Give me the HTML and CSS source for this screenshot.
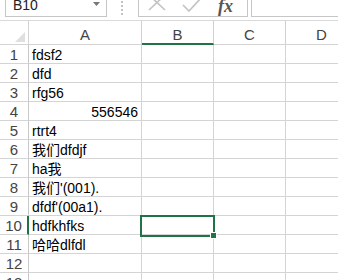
FILE: index.html
```html
<!DOCTYPE html>
<html lang="zh">
<head>
<meta charset="utf-8">
<link rel="stylesheet" href="styles.css">
</head>
<body>
<div class="toolbar">
  <div class="namebox">
    <span class="name">B10</span>
    <svg class="dd" width="7" height="4" viewBox="0 0 7 4"><path d="M0 0H7L3.5 4Z" fill="#777"/></svg>
  </div>
  <div class="dots"><i></i><i></i><i></i><i></i></div>
  <div class="fnbox">
    <svg class="ic-x" width="22" height="12" viewBox="0 0 22 12"><path d="M3 -5L19 10M19 -5L3 10" stroke="#c4c4c4" stroke-width="1.7" fill="none"/></svg>
    <svg class="ic-ok" width="22" height="12" viewBox="0 0 22 12"><path d="M2 5L8 11L20 -2" stroke="#c4c4c4" stroke-width="1.7" fill="none"/></svg>
    <span class="fx">fx</span>
  </div>
  <div class="formula"></div>
</div>
<div class="sheet">
  <div class="corner"><span class="tri"></span></div>
  <div class="ch">A</div><div class="ch sel">B</div><div class="ch">C</div><div class="ch">D</div>

  <div class="rh">1</div><div class="c">fdsf2</div><div class="c"></div><div class="c"></div><div class="c"></div>
  <div class="rh">2</div><div class="c">dfd</div><div class="c"></div><div class="c"></div><div class="c"></div>
  <div class="rh">3</div><div class="c">rfg56</div><div class="c"></div><div class="c"></div><div class="c"></div>
  <div class="rh">4</div><div class="c num">556546</div><div class="c"></div><div class="c"></div><div class="c"></div>
  <div class="rh">5</div><div class="c">rtrt4</div><div class="c"></div><div class="c"></div><div class="c"></div>
  <div class="rh">6</div><div class="c">我们dfdjf</div><div class="c"></div><div class="c"></div><div class="c"></div>
  <div class="rh">7</div><div class="c">ha我</div><div class="c"></div><div class="c"></div><div class="c"></div>
  <div class="rh">8</div><div class="c">我们'(001).</div><div class="c"></div><div class="c"></div><div class="c"></div>
  <div class="rh">9</div><div class="c">dfdf'(00a1).</div><div class="c"></div><div class="c"></div><div class="c"></div>
  <div class="rh rsel">10</div><div class="c">hdfkhfks</div><div class="c active"><span class="selbox"><span class="handle"></span></span></div><div class="c"></div><div class="c"></div>
  <div class="rh">11</div><div class="c">哈哈dlfdl</div><div class="c"></div><div class="c"></div><div class="c"></div>
  <div class="rh">12</div><div class="c"></div><div class="c"></div><div class="c"></div><div class="c"></div>
  <div class="rh">13</div><div class="c"></div><div class="c"></div><div class="c"></div><div class="c"></div>
</div>
</body>
</html>
```
FILE: styles.css
```css
html, body {
  margin: 0;
  padding: 0;
  background: #fff;
  overflow: hidden;
  width: 338px;
  height: 280px;
}
body {
  font-family: "Liberation Sans", "Noto Sans CJK SC", sans-serif;
}
.toolbar {
  display: flex;
  align-items: flex-start;
  height: 20px;
}
.namebox {
  margin-left: 5px;
  width: 102px;
  height: 17px;
  box-sizing: border-box;
  border: 1px solid #c6c6c6;
  border-top: none;
  display: flex;
  align-items: flex-start;
  justify-content: space-between;
  padding: 0 6px 0 7px;
}
.name {
  font-size: 14px;
  line-height: 12px;
  color: #222;
  margin-top: -1px;
}
.dd {
  margin-top: 2px;
}
.dots {
  margin-left: 14px;
  width: 2px;
  display: flex;
  flex-direction: column;
  gap: 2px;
  padding-top: 1px;
}
.dots i {
  display: block;
  width: 2px;
  height: 2px;
  background: #c2c2c2;
}
.fnbox {
  margin-left: 15px;
  width: 110px;
  height: 17px;
  box-sizing: border-box;
  border: 1px solid #c6c6c6;
  border-top: none;
  display: flex;
  align-items: flex-start;
  padding-left: 7px;
}
.ic-x {
  display: block;
}
.ic-ok {
  display: block;
  margin-left: 13px;
}
.fx {
  margin-left: 15px;
  font-family: "Liberation Serif", serif;
  font-style: italic;
  font-weight: bold;
  font-size: 18px;
  line-height: 12px;
  color: #555;
}
.formula {
  margin-left: 3px;
  flex: 1;
  height: 17px;
  box-sizing: border-box;
  border: 1px solid #c6c6c6;
  border-top: none;
  border-right: none;
}
.sheet {
  display: grid;
  grid-template-columns: 29px 113px 72px 72px 72px;
  grid-template-rows: 25px repeat(13, 19px);
  width: 358px;
}
.sheet > div {
  box-sizing: border-box;
  border-right: 1px solid #d4d4d4;
  border-bottom: 1px solid #d4d4d4;
  font-size: 14px;
  white-space: nowrap;
}
.corner {
  position: relative;
  border-top: 1px solid #dadada;
}
.tri {
  position: absolute;
  right: 3px;
  bottom: 2px;
  width: 0;
  height: 0;
  border-left: 10px solid transparent;
  border-bottom: 10px solid #dfdfdf;
}
.ch {
  border-top: 1px solid #dadada;
  text-align: center;
  color: #444;
  font-size: 15px !important;
  display: flex;
  align-items: flex-end;
  justify-content: center;
  padding-bottom: 1px;
  border-right-color: #d0d0d0 !important;
}
.ch.sel {
  border-bottom: 2px solid #217346 !important;
  padding-bottom: 0;
}
.rh {
  color: #444;
  font-size: 15px !important;
  text-align: center;
  line-height: 18px;
  padding-top: 1px;
  border-right-color: #c8c8c8 !important;
}
.rh.rsel {
  border-right: 2px solid #217346 !important;
}
.c {
  color: #000;
  line-height: 18px;
  padding: 1px 3px 0;
  overflow: visible;
}
.c.num {
  text-align: right;
}
.active {
  position: relative;
}
.selbox {
  position: absolute;
  left: -2px;
  top: -1px;
  width: 75px;
  height: 22px;
  box-sizing: border-box;
  border: 2px solid #217346;
  z-index: 2;
}
.handle {
  position: absolute;
  right: -4px;
  bottom: -4px;
  width: 5px;
  height: 5px;
  background: #217346;
  border: 1px solid #fff;
}
```
